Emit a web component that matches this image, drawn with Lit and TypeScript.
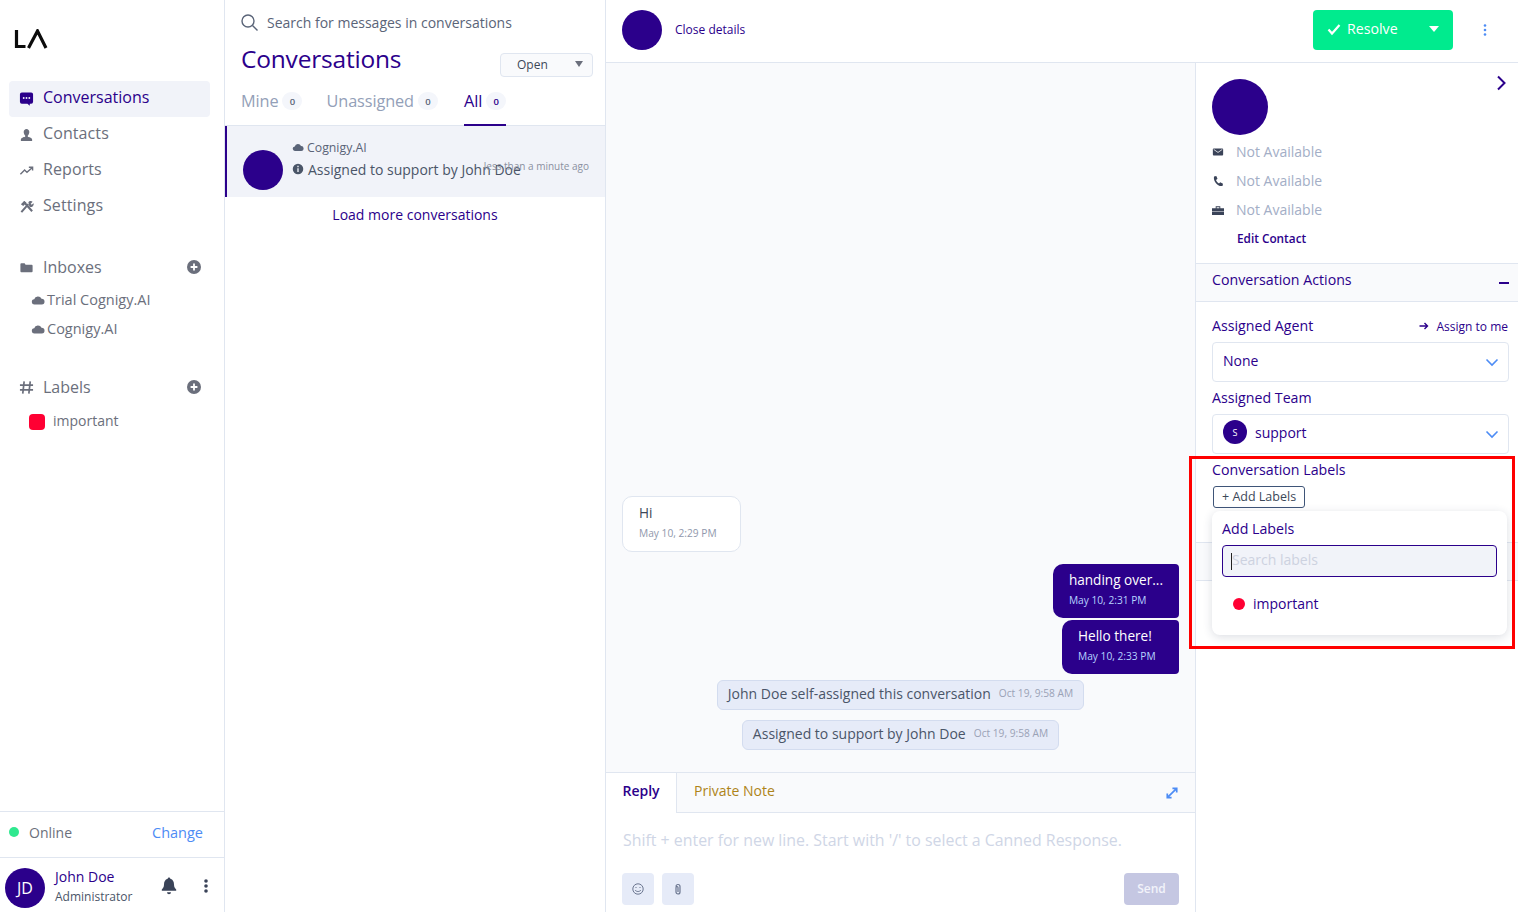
import { LitElement, css, html, svg } from 'lit';
import { customElement } from 'lit/decorators.js';

const icon = (body: unknown, size = 16, vb = '0 0 16 16') => html`<svg
  class="ico"
  width=${size}
  height=${size}
  viewBox=${vb}
  fill="currentColor"
>
  ${body}
</svg>`;

const cloud = svg`<path d="M4.2 13.2a3 3 0 0 1-.5-6A4.4 4.4 0 0 1 12 6.6a3.3 3.3 0 0 1 .3 6.6z"/>`;
const plusCircle = html`<svg class="ico" width="14" height="14" viewBox="0 0 14 14">
  <circle cx="7" cy="7" r="7" fill="currentColor" />
  <path d="M7 3.6v6.8M3.6 7h6.8" stroke="#fff" stroke-width="1.8" />
</svg>`;
const chevron = html`<svg class="ico" width="14" height="14" viewBox="0 0 14 14" fill="none">
  <path d="M1.5 4.5 7 10l5.5-5.5" stroke="#4d8cf5" stroke-width="1.6" />
</svg>`;

const NAV = [
  {
    label: 'Conversations',
    active: true,
    icon: svg`<path d="M3 1.5h10a2 2 0 0 1 2 2v8a2 2 0 0 1-2 2h-1.5v2.2L9 13.5H3a2 2 0 0 1-2-2v-8a2 2 0 0 1 2-2z"/><circle cx="5" cy="7.5" r="1" fill="#f1f3f9"/><circle cx="8" cy="7.5" r="1" fill="#f1f3f9"/><circle cx="11" cy="7.5" r="1" fill="#f1f3f9"/>`,
  },
  {
    label: 'Contacts',
    icon: svg`<path d="M8 2c1.8 0 3 1.4 3 3.3 0 1.700-.8 3-1.600 3.800v1.300c1.600.5 4.600 1.100 4.600 2.900V15H2v-1.700c0-1.800 3-2.400 4.600-2.900V9.100C5.800 8.300 5 7 5 5.300 5 3.400 6.200 2 8 2z"/>`,
  },
  {
    label: 'Reports',
    icon: svg`<path d="M1.5 12 6 7.5l2.500 2.500L14 5M10.500 4.500H14.500V8" fill="none" stroke="currentColor" stroke-width="1.5"/>`,
  },
  {
    label: 'Settings',
    icon: svg`<path d="M2.500 14 10 5.500M5 3l9 10" fill="none" stroke="currentColor" stroke-width="2.2"/><path d="M2 5.500 5.500 2l2.500 2-3.500 3.500zM10 3.500A3 3 0 0 1 14.500 3L12.500 5l1 1 2-1.500A3 3 0 0 1 11 8z"/>`,
  },
];

@customElement('app-root')
export class AppRoot extends LitElement {
  static styles = css`
    :host {
      display: block;
      position: relative;
      width: 1518px;
      height: 912px;
      overflow: hidden;
      background: #fff;
      font-family: 'Open Sans', 'Noto Sans', sans-serif;
      font-size: 14px;
      color: #3c4858;
      --primary: #2b008b;
      --line: #e0e6f0;
      --muted: #6b6f7c;
    }
    * {
      box-sizing: border-box;
    }
    .ico {
      display: block;
      flex: none;
    }
    .app {
      display: grid;
      grid-template-columns: 225px 381px 1fr;
      height: 912px;
    }
    .avatar {
      flex: none;
      border-radius: 50%;
      background: var(--primary);
      color: #fff;
      font-style: normal;
      display: flex;
      align-items: center;
      justify-content: center;
    }

    /* sidebar */
    .side {
      display: flex;
      flex-direction: column;
      border-right: 1px solid var(--line);
      color: var(--muted);
      height: 912px;
    }
    .logo {
      height: 81px;
      padding: 29px 0 0 14px;
      color: #0c0c0c;
    }
    .nav {
      display: flex;
      flex-direction: column;
      padding: 0 14px 0 9px;
    }
    .nav-item {
      display: flex;
      align-items: center;
      gap: 9px;
      height: 36px;
      padding: 0 0 5px 10px;
      border-radius: 4px;
      font-size: 16px;
      letter-spacing: 0.1px;
    }
    .nav-item .ico {
      margin-top: 3px;
    }
    .nav-item.active {
      background: #f1f3f9;
      color: var(--primary);
      font-weight: 500;
      letter-spacing: 0;
    }
    .side-group {
      display: flex;
      align-items: center;
      justify-content: space-between;
      height: 36px;
      padding: 0 23px 2px 19px;
      font-size: 16px;
    }
    .side-group > span {
      display: flex;
      align-items: center;
      gap: 9px;
    }
    .inboxes {
      margin-top: 25px;
    }
    .labels {
      margin-top: 25px;
    }
    .sub-item {
      display: flex;
      align-items: center;
      gap: 2px;
      height: 29px;
      padding: 0 0 5px 31px;
      font-size: 14.5px;
    }
    .sub-item .ico {
      margin-top: 2px;
    }
    .inbox-list {
      padding-top: 1px;
    }
    .label-item {
      display: flex;
      align-items: center;
      gap: 8px;
      height: 32px;
      padding: 0 0 5px 29px;
      margin-top: 1px;
      font-size: 14px;
    }
    .swatch {
      width: 16px;
      height: 16px;
      border-radius: 4px;
      background: #ff0033;
      margin-top: 3px;
    }
    .status {
      margin-top: auto;
      display: flex;
      align-items: center;
      justify-content: space-between;
      height: 47px;
      padding: 0 21px 5px 9px;
      border-top: 1px solid var(--line);
      border-bottom: 1px solid var(--line);
      font-size: 14px;
    }
    .status > span {
      display: flex;
      align-items: center;
      gap: 10px;
    }
    .dot {
      width: 10px;
      height: 10px;
      border-radius: 50%;
      background: #2fe88f;
    }
    .change {
      color: #4d8cf5;
      font-size: 14.5px;
    }
    .me {
      display: flex;
      align-items: center;
      height: 54px;
      padding: 5px 10px 0 5px;
    }
    .me .avatar {
      width: 40px;
      height: 40px;
      font-size: 16px;
    }
    .me-text {
      margin-left: 10px;
      flex: 1;
      display: flex;
      flex-direction: column;
      gap: 2px;
      margin-top: -2px;
    }
    .me-name {
      color: var(--primary);
      font-size: 14px;
      font-weight: 500;
      line-height: 18px;
    }
    .me-role {
      font-size: 12px;
      line-height: 18px;
      color: #4a5568;
    }
    .me-actions {
      display: flex;
      align-items: center;
      gap: 19px;
      color: #3a4358;
      margin-top: -3px;
    }

    /* conversation list */
    .list {
      border-right: 1px solid var(--line);
      display: flex;
      flex-direction: column;
    }
    .search {
      display: flex;
      align-items: center;
      gap: 9px;
      height: 44px;
      padding: 1px 0 0 16px;
      font-size: 14px;
      color: #5a6478;
    }
    .list-head {
      display: flex;
      justify-content: space-between;
      align-items: center;
      height: 34px;
      padding: 0 12px 0 16px;
    }
    .list-head h1 {
      margin: 0 0 6px;
      font-size: 24.5px;
      font-weight: 500;
      letter-spacing: -0.2px;
      color: var(--primary);
    }
    .status-select {
      width: 93px;
      height: 24px;
      margin-top: 8px;
      border: 1px solid var(--line);
      border-radius: 4px;
      background: #f9fafc;
      display: flex;
      align-items: center;
      justify-content: space-between;
      padding: 0 9px 2px 16px;
      font-size: 12px;
      color: #3c4858;
    }
    .caret {
      width: 0;
      height: 0;
      border-left: 4px solid transparent;
      border-right: 4px solid transparent;
      border-top: 6px solid #6b6f7c;
    }
    .tabs {
      display: flex;
      gap: 24px;
      height: 48px;
      padding: 0 0 0 16px;
      border-bottom: 1px solid var(--line);
    }
    .tab {
      display: flex;
      align-items: center;
      gap: 4px;
      height: 48px;
      font-size: 16.3px;
      letter-spacing: -0.1px;
      color: #93a0b8;
      border-bottom: 2px solid transparent;
    }
    .tab.active {
      margin-left: 2px;
      color: var(--primary);
      border-bottom-color: var(--primary);
      font-weight: 500;
    }
    .count {
      width: 20px;
      height: 18px;
      border-radius: 9px;
      background: #f4f6fb;
      display: flex;
      align-items: center;
      justify-content: center;
      font-size: 9.5px;
      font-weight: 600;
      color: #5a6478;
      letter-spacing: 0;
    }
    .tab.active .count {
      color: var(--primary);
    }
    .card {
      position: relative;
      display: flex;
      gap: 10px;
      height: 71px;
      background: #f1f3f9;
      border-left: 2px solid var(--primary);
      padding: 24px 0 0 16px;
    }
    .card .avatar {
      width: 40px;
      height: 40px;
    }
    .card-body {
      margin: -13px 0 0 -1px;
    }
    .card-inbox {
      display: flex;
      align-items: center;
      gap: 3px;
      height: 20px;
      font-size: 12.3px;
      color: #5a6478;
    }
    .card-msg {
      display: flex;
      align-items: center;
      gap: 4px;
      height: 24px;
      font-size: 14px;
      color: #4a5568;
      white-space: nowrap;
    }
    .card-time {
      position: absolute;
      right: 16px;
      top: 33px;
      font-size: 10px;
      color: #8a90a0;
    }
    .more {
      text-align: center;
      padding-top: 8px;
      color: var(--primary);
      font-size: 14px;
      font-weight: 500;
    }

    /* right region */
    .right {
      display: flex;
      flex-direction: column;
      min-width: 0;
    }
    .top {
      display: flex;
      align-items: center;
      height: 63px;
      flex: none;
      padding: 0 28px 3px 16px;
      border-bottom: 1px solid var(--line);
    }
    .top .avatar {
      width: 40px;
      height: 40px;
    }
    .close {
      margin-left: 13px;
      font-size: 12px;
      font-weight: 500;
      color: var(--primary);
    }
    .resolve {
      margin-left: auto;
      width: 140px;
      height: 40px;
      border-radius: 4px;
      background: #00eb8e;
      color: #fff;
      display: flex;
      align-items: center;
      padding: 0 14px 2px;
      font-size: 14.2px;
      font-weight: 500;
      gap: 6px;
    }
    .resolve .caret {
      margin-left: auto;
      border-top-color: #fff;
      border-left-width: 5px;
      border-right-width: 5px;
    }
    .kebab {
      margin-left: 27px;
      color: #4d8cf5;
    }
    .body {
      flex: 1;
      display: flex;
      min-height: 0;
    }

    /* chat */
    .chat {
      width: 590px;
      flex: none;
      border-right: 1px solid var(--line);
      display: flex;
      flex-direction: column;
    }
    .messages {
      flex: 1;
      background: #f9fafc;
      display: flex;
      flex-direction: column;
      justify-content: flex-end;
      padding: 0 16px 22px;
    }
    .bubble {
      display: flex;
      flex-direction: column;
      justify-content: center;
      gap: 4px;
      height: 54px;
      padding-bottom: 6px;
      border-radius: 10px;
      font-size: 13.6px;
    }
    .bubble time {
      font-size: 10.2px;
    }
    .in {
      align-self: flex-start;
      width: 119px;
      height: 56px;
      padding: 0 16px 5px;
      margin-bottom: 12px;
      background: #fff;
      border: 1px solid var(--line);
      color: #3c4858;
    }
    .in time {
      color: #9098ac;
    }
    .out {
      align-self: flex-end;
      min-width: 117px;
      padding: 0 16px 5px;
      margin-bottom: 2px;
      background: var(--primary);
      color: #fff;
      border-radius: 10px 4px 4px 10px;
    }
    .out time {
      color: #b7d3ff;
    }
    .activity {
      align-self: center;
      display: flex;
      align-items: center;
      gap: 8px;
      height: 30px;
      padding: 0 10px 4px;
      margin-top: 10px;
      background: #e6ebf8;
      border: 1px solid #d3dcef;
      border-radius: 6px;
      font-size: 14px;
      color: #4a5568;
      white-space: nowrap;
    }
    .activity.first {
      margin-top: 4px;
    }
    .activity time {
      font-size: 10.2px;
      color: #9aa2b6;
    }
    .reply {
      height: 140px;
      flex: none;
      border-top: 1px solid var(--line);
      display: flex;
      flex-direction: column;
    }
    .reply-tabs {
      display: flex;
      align-items: center;
      height: 40px;
      flex: none;
      background: #f9fafc;
      border-bottom: 1px solid var(--line);
      padding-right: 17px;
      font-size: 14px;
    }
    .reply-tab {
      height: 40px;
      width: 71px;
      padding-bottom: 4px;
      display: flex;
      align-items: center;
      justify-content: center;
      background: #fff;
      border-right: 1px solid var(--line);
      color: var(--primary);
      font-weight: 600;
    }
    .note {
      margin: 0 0 4px 17px;
      color: #ae8419;
      font-weight: 500;
    }
    .expand {
      margin-left: auto;
      color: #4d8cf5;
    }
    .placeholder {
      padding: 16px 17px 0;
      height: 60px;
      font-size: 15.9px;
      color: #cfd6e6;
      white-space: nowrap;
    }
    .reply-foot {
      display: flex;
      align-items: center;
      gap: 8px;
      padding: 0 16px;
    }
    .tool {
      width: 32px;
      height: 32px;
      border-radius: 4px;
      background: #e6ebf8;
      color: #6b7690;
      display: flex;
      align-items: center;
      justify-content: center;
    }
    .send {
      margin-left: auto;
      width: 55px;
      height: 32px;
      padding-bottom: 2px;
      border-radius: 4px;
      background: #c5c7e2;
      color: #f2f3fa;
      font-size: 12px;
      font-weight: 600;
      display: flex;
      align-items: center;
      justify-content: center;
    }

    /* details */
    .details {
      flex: 1;
      min-width: 0;
      position: relative;
      display: flex;
      flex-direction: column;
    }
    .contact {
      position: relative;
      height: 201px;
      flex: none;
      padding: 16px 0 0 16px;
      border-bottom: 1px solid var(--line);
    }
    .contact .avatar {
      width: 56px;
      height: 56px;
      margin-bottom: 2px;
    }
    .collapse {
      position: absolute;
      right: 11px;
      top: 12px;
      color: var(--primary);
    }
    .info {
      display: flex;
      align-items: center;
      height: 29px;
      font-size: 14px;
      color: #a3aec6;
    }
    .info .ico {
      color: #3a4358;
      margin-right: 12px;
    }
    .edit {
      padding: 6px 0 0 25px;
      color: var(--primary);
      font-size: 11.8px;
      font-weight: 600;
    }
    .sec-head {
      display: flex;
      align-items: center;
      justify-content: space-between;
      height: 38px;
      flex: none;
      padding: 0 9px 7px 16px;
      background: #f9fafc;
      border-bottom: 1px solid var(--line);
      color: var(--primary);
      font-size: 14.2px;
      font-weight: 500;
    }
    .minus {
      width: 10px;
      height: 2px;
      background: var(--primary);
      margin-top: 7px;
    }
    .actions {
      height: 241px;
      flex: none;
      padding: 13px 9px 0 16px;
      border-bottom: 1px solid var(--line);
      position: relative;
    }
    .field-label {
      display: flex;
      align-items: center;
      justify-content: space-between;
      height: 22px;
      padding-bottom: 2px;
      color: var(--primary);
      font-size: 14.2px;
      font-weight: 500;
    }
    .assign {
      display: flex;
      align-items: center;
      gap: 7px;
      margin-top: 2px;
      font-size: 12px;
      font-weight: 500;
      margin-right: 1px;
    }
    .select {
      display: flex;
      align-items: center;
      justify-content: space-between;
      height: 40px;
      margin: 5px 0;
      padding: 0 9px 4px 10px;
      border: 1px solid var(--line);
      border-radius: 4px;
      color: var(--primary);
      font-size: 14px;
      font-weight: 500;
    }
    .select .ico {
      margin-top: 4px;
    }
    .select > span {
      display: flex;
      align-items: center;
      gap: 8px;
    }
    .select .avatar {
      width: 24px;
      height: 24px;
      font-size: 9px;
    }
    .add-btn {
      display: inline-flex;
      align-items: center;
      height: 22px;
      margin: 5px 0 0 1px;
      padding: 0 8px 2px;
      border: 1px solid #3f5578;
      border-radius: 3px;
      font-size: 12.5px;
      font-weight: 500;
      color: #3c4858;
    }
    .popup {
      position: absolute;
      left: 16px;
      top: 209px;
      width: 295px;
      height: 124px;
      z-index: 2;
      background: #fff;
      border-radius: 8px;
      box-shadow: 0 2px 10px rgba(40, 50, 80, 0.16);
      padding: 8px 10px;
    }
    .popup h2 {
      margin: 0;
      height: 20px;
      font-size: 14.2px;
      font-weight: 500;
      line-height: 20px;
      color: var(--primary);
    }
    .popup-input {
      display: flex;
      align-items: center;
      height: 32px;
      margin-top: 6px;
      padding: 0 0 3px 8px;
      border: 1px solid var(--primary);
      border-radius: 4px;
      background: #f1f3f9;
      font-size: 14px;
      color: #cdd2e0;
    }
    .cursor {
      width: 1px;
      height: 17px;
      background: #222;
      margin-top: 3px;
    }
    .popup-item {
      display: flex;
      align-items: center;
      gap: 8px;
      margin-top: 15px;
      padding: 0 0 2px 11px;
      height: 24px;
      color: var(--primary);
      font-size: 14px;
      font-weight: 500;
    }
    .popup-dot {
      width: 12px;
      height: 12px;
      border-radius: 50%;
      background: #ff0033;
      margin-top: 2px;
    }
    .prev {
      height: 38px;
    }
    .mark {
      position: absolute;
      left: 1189px;
      top: 456px;
      width: 326px;
      height: 193px;
      border: 3px solid #ff0000;
      z-index: 3;
      pointer-events: none;
    }
  `;

  private renderSidebar() {
    return html`<aside class="side">
      <div class="logo">
        <svg class="ico" width="34" height="20" viewBox="0 0 34 20" fill="none" stroke="currentColor" stroke-width="3.2">
          <path d="M2.500 1v16.500h9" />
          <path d="M14.500 19 23.500 2 32 19" />
        </svg>
      </div>
      <nav class="nav">
        ${NAV.map(
          (n) => html`<div class="nav-item ${n.active ? 'active' : ''}">${icon(n.icon, 15)}${n.label}</div>`,
        )}
      </nav>
      <div class="side-group inboxes">
        <span>${icon(svg`<path d="M1.500 4.500a1 1 0 0 1 1-1H6l1 1.500h6.500a1 1 0 0 1 1 1V12a1 1 0 0 1-1 1h-11a1 1 0 0 1-1-1z"/>`, 15)}Inboxes</span>
        ${plusCircle}
      </div>
      <div class="inbox-list">
        <div class="sub-item">${icon(cloud, 14)}Trial Cognigy.AI</div>
        <div class="sub-item">${icon(cloud, 14)}Cognigy.AI</div>
      </div>
      <div class="side-group labels">
        <span>${icon(svg`<path d="M5.500 1.500 4 14.500M12 1.500l-1.500 13M1 5.500h14M1 10.500h14" fill="none" stroke="currentColor" stroke-width="1.8"/>`, 15)}Labels</span>
        ${plusCircle}
      </div>
      <div class="label-item"><span class="swatch"></span>important</div>
      <div class="status">
        <span><i class="dot"></i>Online</span>
        <span class="change">Change</span>
      </div>
      <div class="me">
        <div class="avatar">JD</div>
        <div class="me-text">
          <span class="me-name">John Doe</span>
          <span class="me-role">Administrator</span>
        </div>
        <div class="me-actions">
          ${icon(svg`<path d="M10 1.500c.8 0 1.300.6 1.300 1.300 2.700.8 3.700 3 3.700 5.700 0 2.500 1 3.700 2.200 5v1.200H2.800v-1.200C4 12.200 5 11 5 8.500c0-2.700 1-4.900 3.700-5.700 0-.7.500-1.300 1.300-1.300zM8 16.200h4a2 2 0 0 1-4 0z"/>`, 20, '0 0 20 20')}
          ${icon(svg`<circle cx="8" cy="3" r="1.800"/><circle cx="8" cy="8" r="1.800"/><circle cx="8" cy="13" r="1.800"/>`)}
        </div>
      </div>
    </aside>`;
  }

  private renderList() {
    return html`<section class="list">
      <div class="search">
        <svg class="ico" width="17" height="17" viewBox="0 0 17 17" fill="none" stroke="#5a6478" stroke-width="1.4">
          <circle cx="7" cy="7" r="6" />
          <path d="m11.500 11.500 5 5" />
        </svg>
        Search for messages in conversations
      </div>
      <div class="list-head">
        <h1>Conversations</h1>
        <div class="status-select">Open<i class="caret"></i></div>
      </div>
      <div class="tabs">
        <div class="tab">Mine <span class="count">0</span></div>
        <div class="tab">Unassigned <span class="count">0</span></div>
        <div class="tab active">All <span class="count">0</span></div>
      </div>
      <div class="card">
        <div class="avatar"></div>
        <div class="card-body">
          <div class="card-inbox">${icon(cloud, 12)}Cognigy.AI</div>
          <div class="card-msg">
            ${icon(svg`<circle cx="8" cy="8" r="7"/><path d="M8 7v5M8 3.700v1.800" stroke="#f1f3f9" stroke-width="1.8"/>`, 12)}
            Assigned to support by John Doe
          </div>
        </div>
        <span class="card-time">less than a minute ago</span>
      </div>
      <div class="more">Load more conversations</div>
    </section>`;
  }

  private renderChat() {
    return html`<section class="chat">
      <div class="messages">
        <div class="bubble in">Hi<time>May 10, 2:29 PM</time></div>
        <div class="bubble out">handing over...<time>May 10, 2:31 PM</time></div>
        <div class="bubble out">Hello there!<time>May 10, 2:33 PM</time></div>
        <div class="activity first">John Doe self-assigned this conversation <time>Oct 19, 9:58 AM</time></div>
        <div class="activity">Assigned to support by John Doe <time>Oct 19, 9:58 AM</time></div>
      </div>
      <div class="reply">
        <div class="reply-tabs">
          <div class="reply-tab">Reply</div>
          <span class="note">Private Note</span>
          <svg class="ico expand" width="12" height="12" viewBox="0 0 14 14" fill="none" stroke="currentColor" stroke-width="2">
            <path d="M1.500 12.500 12.500 1.500M7.500 1.500h5v5M1.500 7.500v5h5" />
          </svg>
        </div>
        <div class="placeholder">Shift + enter for new line. Start with '/' to select a Canned Response.</div>
        <div class="reply-foot">
          <div class="tool">
            <svg class="ico" width="12" height="12" viewBox="0 0 12 12" fill="none" stroke="currentColor" stroke-width="1">
              <circle cx="6" cy="6" r="5.200" />
              <path d="M3 7c1.500 2 4.500 2 6 0M3.500 4.500h1M7.500 4.500h1" />
            </svg>
          </div>
          <div class="tool">
            <svg class="ico" width="12" height="12" viewBox="0 0 12 12" fill="none" stroke="currentColor" stroke-width="1.2">
              <path d="M4 3.500a2 2 0 0 1 4 0v5.500a2 2 0 0 1-4 0V4.500a1 1 0 0 1 2 0v4.500" />
            </svg>
          </div>
          <div class="send">Send</div>
        </div>
      </div>
    </section>`;
  }

  private renderDetails() {
    return html`<section class="details">
      <div class="contact">
        <div class="avatar"></div>
        <svg class="ico collapse" width="12" height="16" viewBox="0 0 12 16" fill="none" stroke="currentColor" stroke-width="2">
          <path d="m3 1.500 6.500 6.500L3 14.500" />
        </svg>
        <div class="info">
          ${icon(svg`<rect x="0" y="3" width="12" height="8" rx="1"/><path d="M1 4l5 3.500L11 4" fill="none" stroke="#fff" stroke-width=".9"/>`, 12, '0 0 12 14')}Not Available
        </div>
        <div class="info">
          ${icon(svg`<path d="M2 1.500 4.300 1l1.200 2.800L4 5c.5 1.500 1.500 2.700 3 3.500l1.200-1.300L11 8.700 10.500 11C6 12 1 6.500 2 1.500z"/>`, 12, '0 0 12 12')}Not Available
        </div>
        <div class="info">
          ${icon(svg`<path d="M4 2.500h5v2H8V3.500H5v1H4zM0 4.500h13V8H0zM0 8.800h13V12H0z"/>`, 12, '0 0 13 13')}Not Available
        </div>
        <div class="edit">Edit Contact</div>
      </div>
      <div class="sec-head">Conversation Actions<i class="minus"></i></div>
      <div class="actions">
        <div class="field-label">
          Assigned Agent
          <span class="assign">
            <svg class="ico" width="10" height="10" viewBox="0 0 10 10" fill="none" stroke="currentColor" stroke-width="1.4">
              <path d="M.5 5h8M5.500 2l3 3-3 3" />
            </svg>
            Assign to me
          </span>
        </div>
        <div class="select"><span>None</span>${chevron}</div>
        <div class="field-label">Assigned Team</div>
        <div class="select">
          <span><i class="avatar">S</i>support</span>${chevron}
        </div>
        <div class="field-label">Conversation Labels</div>
        <div class="add-btn">+ Add Labels</div>
        <div class="popup">
          <h2>Add Labels</h2>
          <div class="popup-input"><i class="cursor"></i>Search labels</div>
          <div class="popup-item"><i class="popup-dot"></i>important</div>
        </div>
      </div>
      <div class="sec-head prev"></div>
    </section>`;
  }

  render() {
    return html`<div class="app">
        ${this.renderSidebar()} ${this.renderList()}
        <main class="right">
          <header class="top">
            <div class="avatar"></div>
            <span class="close">Close details</span>
            <div class="resolve">
              <svg class="ico" width="14" height="14" viewBox="0 0 14 14" fill="none" stroke="currentColor" stroke-width="2.2">
                <path d="m1.500 7.500 3.500 4L12.500 3" />
              </svg>
              Resolve
              <i class="caret"></i>
            </div>
            <svg class="ico kebab" width="10" height="14" viewBox="0 0 10 14" fill="currentColor">
              <circle cx="5" cy="2.500" r="1.300" />
              <circle cx="5" cy="7" r="1.300" />
              <circle cx="5" cy="11.500" r="1.300" />
            </svg>
          </header>
          <div class="body">${this.renderChat()} ${this.renderDetails()}</div>
        </main>
      </div>
      <div class="mark"></div>`;
  }
}
